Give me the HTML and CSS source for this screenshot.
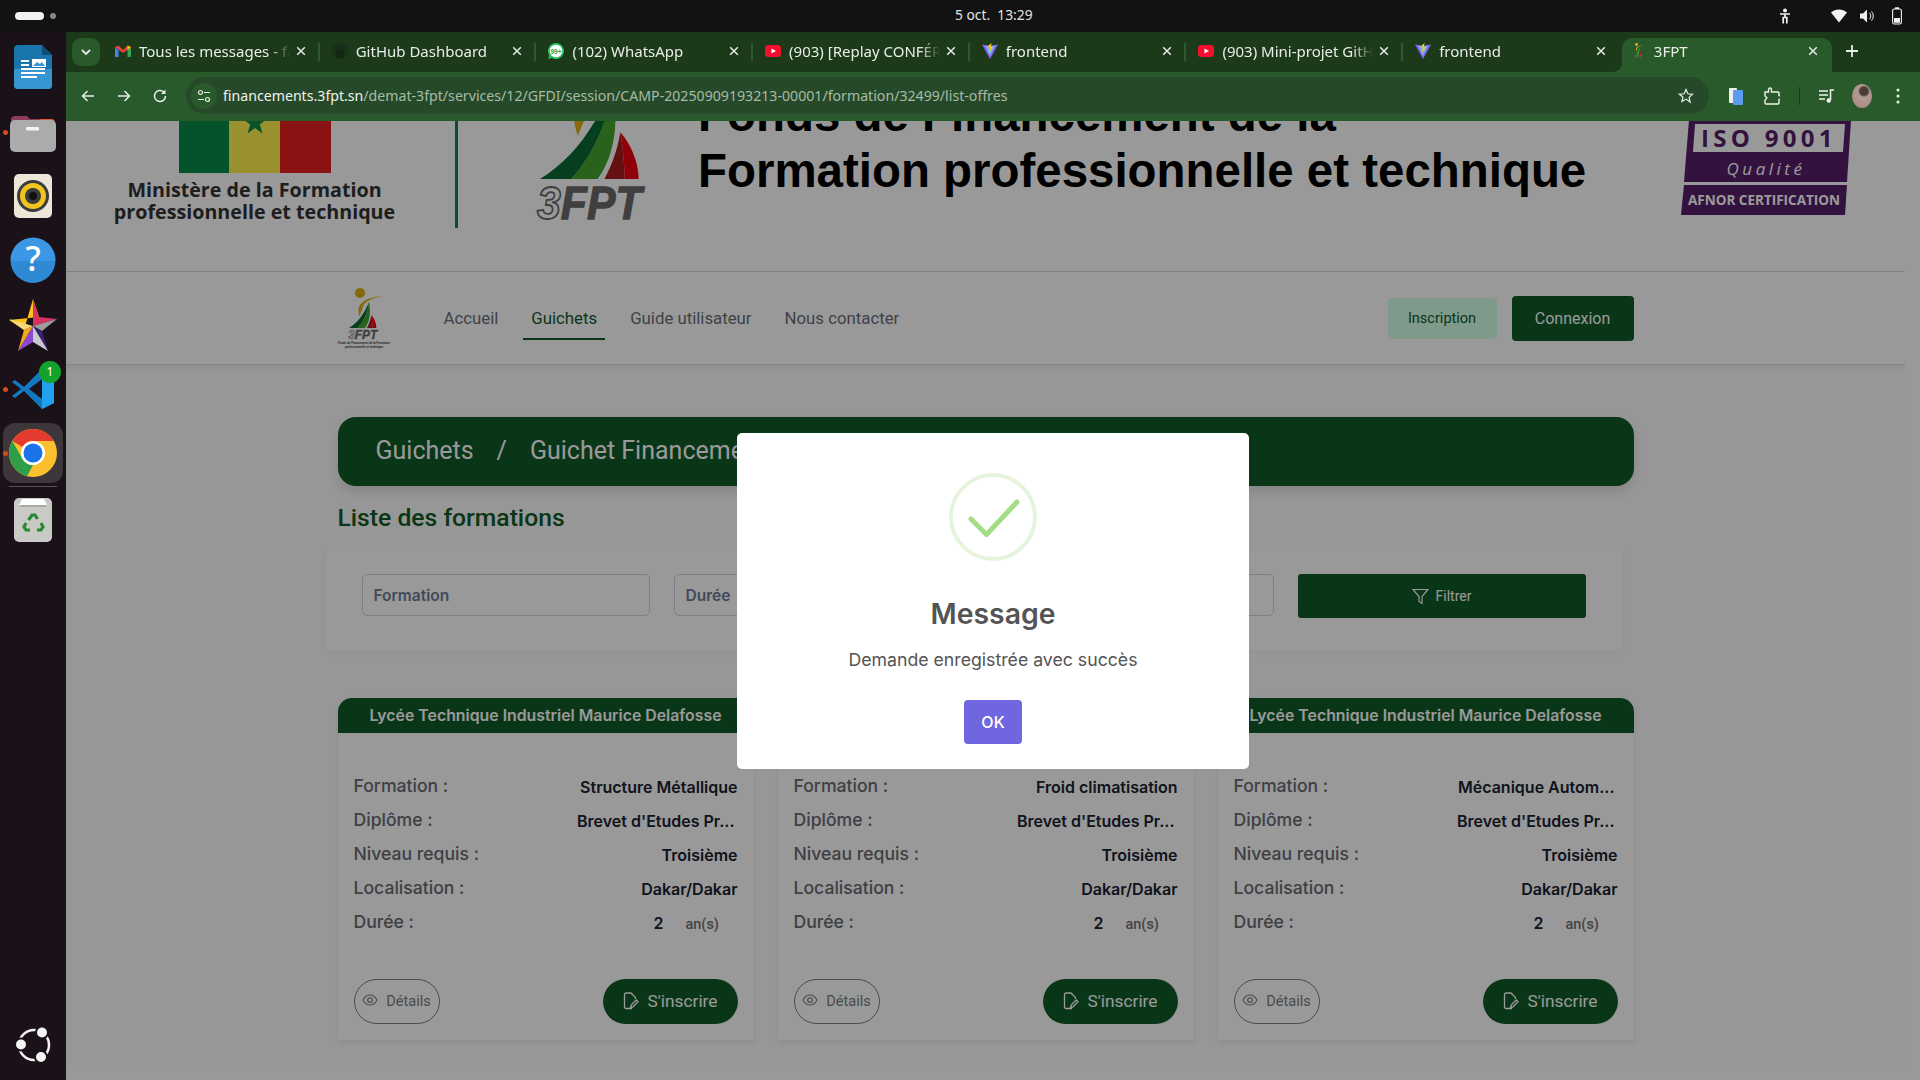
FILE: index.html
```html
<!DOCTYPE html>
<html lang="fr">
<head>
<meta charset="utf-8">
<title>3FPT</title>
<link rel="stylesheet" href="styles.css">
</head>
<body>
<svg class="defs" width="0" height="0" aria-hidden="true">
  <symbol id="logo3fpt" viewBox="0 0 50 54" overflow="visible">
    <circle cx="21" cy="5" r="5" fill="#e0b015"/>
    <path d="M20.500 28C17 18 22 10 44 8 30 11 24 14 23 22Z" fill="#e0b015"/>
    <path d="M10 40C18 35 25 27 30 14 29 24 25 33 18.700 40Z" fill="#0a6a32"/>
    <path d="M18.700 40C24 34 28.500 26 30 14 31.500 20 32 32 26 40Z" fill="#45a32e"/>
    <path d="M27.900 40C30 36 31.500 32 32.300 27 33 31 33.500 36 33.500 40Z" fill="#a81c20"/>
    <path d="M32.300 27C35 30 37.400 35 37.400 40H33.500C33.500 36 33 31 32.300 27Z" fill="#f00010"/>
    <text class="logo-word" x="9.200" y="51" textLength="29" lengthAdjust="spacingAndGlyphs"><tspan class="logo-three">3</tspan>FPT</text>
  </symbol>
  <symbol id="ic-yt" viewBox="0 0 16 16"><rect y="2" width="16" height="12" rx="3.500" fill="#f40f30"/><path d="M6.500 5.500v5L11 8z" fill="#fff"/></symbol>
  <symbol id="ic-vite" viewBox="0 0 16 16"><path d="M0 1.500 8 3l8-1.500L8 16z" fill="#8c5cf6"/><path d="M3 2.500 8 3.300l5-.8L8 13z" fill="#6fb6f5"/><path d="M9.500 0 5.500 3.500 8 4.500 6.500 10 11 4.500 9 4z" fill="#ffc61a"/></symbol>
  <symbol id="ic-x" viewBox="0 0 10 10"><path d="M1.200 1.200l7.600 7.600M8.800 1.200 1.200 8.800" stroke="#e6ece6" stroke-width="1.500" fill="none"/></symbol>
  <symbol id="ic-eye" viewBox="0 0 16 16"><path d="M1 8s2.600-5 7-5 7 5 7 5-2.600 5-7 5-7-5-7-5z" fill="none" stroke="currentColor" stroke-width="1.100"/><circle cx="8" cy="8" r="2.300" fill="none" stroke="currentColor" stroke-width="1.100"/></symbol>
  <symbol id="ic-edit" viewBox="0 0 16 18"><path d="M9 16.500H3A1.500 1.500 0 0 1 1.500 15V2.500A1.500 1.500 0 0 1 3 1h5l4.500 4.500V7" fill="none" stroke="currentColor" stroke-width="1.300"/><path d="M7.500 15.500l.7-2.500 5-5 1.800 1.800-5 5z" fill="none" stroke="currentColor" stroke-width="1.300"/></symbol>
</svg>

<header class="topbar">
  <div class="top-left"><span class="pill"></span><span class="pill-dot"></span></div>
  <div class="clock">5 oct.&nbsp; 13:29</div>
  <div class="top-right">
    <svg width="12" height="16" viewBox="0 0 12 16"><circle cx="6" cy="2.500" r="2" fill="#f2f2f2"/><path d="M1 6h10M6 6v3.500M4.200 15.500V9.500h3.600v6" stroke="#f2f2f2" stroke-width="1.700" fill="none"/></svg>
    <svg class="wifi" width="16" height="14" viewBox="0 0 16 14"><path d="M0 3.500C4.500-.6 11.500-.6 16 3.500L8 13.500z" fill="#f2f2f2"/></svg>
    <svg class="vol" width="16" height="16" viewBox="0 0 16 16"><path d="M1 5.500h3L8 1.500v13l-4-4H1z" fill="#f2f2f2"/><path d="M10.500 5a4.200 4.200 0 0 1 0 6M12.500 3.500a6.500 6.500 0 0 1 0 9" stroke="#f2f2f2" fill="none"/></svg>
    <svg class="batt" width="10" height="18" viewBox="0 0 10 18"><rect x=".6" y="2" width="8.800" height="15" rx="1.800" fill="none" stroke="#f2f2f2" stroke-width="1.100"/><rect x="3" y=".3" width="4" height="1.700" fill="#f2f2f2"/><rect x="2" y="11" width="6" height="4.800" fill="#f2f2f2"/></svg>
  </div>
</header>

<div class="desktop">
  <nav class="dock">
    <div class="dock-item">
      <svg width="38" height="44" viewBox="0 0 38 44"><path d="M4 0H28L38 10V40a4 4 0 0 1-4 4H4a4 4 0 0 1-4-4V4a4 4 0 0 1 4-4z" fill="#1a75ad"/><path d="M0 24H38V40a4 4 0 0 1-4 4H4a4 4 0 0 1-4-4z" fill="#3497d3"/><path d="M28 0 38 10H28z" fill="#0f4e78"/><path d="M7 16h8M7 20h8M7 24h24M7 28h24M7 32h16" stroke="#fff" stroke-width="1.800"/><rect x="18" y="14" width="14" height="8" fill="#fff"/><path d="M19 21l4-4 3 2 2-2 3 4z" fill="#3497d3"/></svg>
    </div>
    <div class="dock-item running">
      <svg width="46" height="40" viewBox="0 0 46 40"><path d="M1 8a4 4 0 0 1 4-4h12l3 3h21a4 4 0 0 1 4 4v10H1z" fill="#8f3b5e"/><path d="M30 7h11a4 4 0 0 1 4 4v6H30z" fill="#d9602c"/><rect y="8" width="46" height="32" rx="5" fill="#ababab"/><rect x="16" y="15" width="13" height="3.500" rx="1" fill="#f4f4f4"/></svg>
    </div>
    <div class="dock-item">
      <svg width="38" height="44" viewBox="0 0 38 44"><rect width="38" height="44" rx="5" fill="#ebe6d8"/><circle cx="19" cy="22" r="16" fill="#3c3c3c"/><circle cx="19" cy="22" r="13" fill="#efc41e"/><circle cx="19" cy="22" r="8" fill="#3a3a3a"/><circle cx="19" cy="22" r="4" fill="#111"/></svg>
    </div>
    <div class="dock-item">
      <svg width="46" height="46" viewBox="0 0 46 46"><circle cx="23" cy="23" r="22.500" fill="#3b97e3"/><path d="M1 24h44a22 22 0 0 1-44 0z" fill="#2f8ad6"/><text class="help-q" x="23" y="34" text-anchor="middle">?</text></svg>
    </div>
    <div class="dock-item">
      <svg class="dock-star" width="48" height="54" viewBox="0 0 48 54"><path d="M24 0 30 18 0 21 15 31z" fill="#fbc41a"/><path d="M24 0 30 18 48 20 24 27z" fill="#d8335f"/><path d="M48 20 33 32 24 27z" fill="#9c9c9c"/><path d="M33 32 39 52 24 27z" fill="#3a2370"/><path d="M39 52 24 43 24 27z" fill="#c8c8d0"/><path d="M24 43 9 52 24 27z" fill="#8a4bd0"/><path d="M9 52 15 31 24 27z" fill="#f2a81a"/><path d="M0 20 24 27 15 31z" fill="#f7d878"/></svg>
    </div>
    <div class="dock-item running">
      <svg width="42" height="40" viewBox="0 0 42 40"><path d="M30 0 12 18 3 11 0 13 9 20 0 27 3 29 12 22 30 40 42 34V6z" fill="#1279bf"/><path d="M30 0 42 6V34L30 40z" fill="#21a0ef"/><path d="M30 10 17 20 30 30z" fill="#1b1118"/></svg>
      <span class="dock-badge">1</span>
    </div>
    <div class="dock-item running active">
      <svg width="48" height="48" viewBox="0 0 48 48"><circle cx="24" cy="24" r="24" fill="#fbc02d"/><path d="M24 0A24 24 0 0 1 44.800 12H24a12 12 0 0 0-10.400 6L3.300 12A24 24 0 0 1 24 0z" fill="#e33b2e"/><path d="M3.300 12 13.600 30A12 12 0 0 0 24 36L18 47.300A24 24 0 0 1 3.300 12z" fill="#2e9e4a"/><circle cx="24" cy="24" r="12" fill="#fff"/><circle cx="24" cy="24" r="9.500" fill="#1a73e8"/></svg>
    </div>
    <div class="dock-sep"></div>
    <div class="dock-item">
      <svg width="38" height="44" viewBox="0 0 38 44"><rect width="38" height="44" rx="5" fill="#c9c9c5"/><path d="M5 7 8 1H30L33 7z" fill="#fff"/><path d="M6 8H32" stroke="#8a8a86"/><g fill="none" stroke="#2d8a34" stroke-width="3.200"><path d="M14.500 22l3.500-5h3l2.500 4"/><path d="M27 25l2 4-2 3h-4"/><path d="M16 32h-4l-2-3 2-4"/></g></svg>
    </div>
    <div class="dock-ubuntu">
      <svg width="36" height="36" viewBox="0 0 36 36"><circle cx="18" cy="18" r="15" fill="none" stroke="#f4f4f4" stroke-width="2.500"/><g fill="#f4f4f4" stroke="#1b1118" stroke-width="2"><circle cx="26" cy="5.500" r="6"/><circle cx="5" cy="17.500" r="6"/><circle cx="25" cy="30" r="6"/></g></svg>
    </div>
  </nav>

  <div class="browser">
    <div class="tabstrip">
      <div class="tabsearch"><svg width="12" height="8" viewBox="0 0 12 8"><path d="M2 2l4 4 4-4" stroke="#e6ece6" stroke-width="1.800" fill="none"/></svg></div>
      <div class="tab">
        <svg class="fav" viewBox="0 0 16 12"><path d="M0 2V11a1 1 0 0 0 1 1H3.500V5.500z" fill="#4285f4"/><path d="M16 2V11a1 1 0 0 1-1 1H12.500V5.500z" fill="#34a853"/><path d="M0 2 3.500 .4 8 5 12.500.4 16 2 8 8z" fill="#ea4335"/><path d="M12.500.4 16 2 12.500 5.500z" fill="#fbbc04"/></svg>
        <span class="tab-title">Tous les messages - fatou</span><svg class="tab-x"><use href="#ic-x"/></svg>
      </div>
      <div class="tab">
        <svg class="fav" viewBox="0 0 16 16"><circle cx="8" cy="8" r="8" fill="#18301a"/><path d="M4 15c1-2 1-3 0-5-.5-3 1-4 2-4h4c1 0 2.500 1 2 4-1 2-1 3 0 5z" fill="#132714"/></svg>
        <span class="tab-title">GitHub Dashboard</span><svg class="tab-x"><use href="#ic-x"/></svg>
      </div>
      <div class="tab">
        <svg class="fav" viewBox="0 0 16 16"><path d="M8 0a8 8 0 0 0-6.800 12.200L0 16l3.900-1.100A8 8 0 1 0 8 0z" fill="#25c05f"/><circle cx="8" cy="8" r="6.300" fill="#fff"/><text class="fav-num" x="8" y="10.500" text-anchor="middle">99+</text></svg>
        <span class="tab-title">(102) WhatsApp</span><svg class="tab-x"><use href="#ic-x"/></svg>
      </div>
      <div class="tab">
        <svg class="fav"><use href="#ic-yt"/></svg>
        <span class="tab-title">(903) [Replay CONFÉRENCE</span><svg class="tab-x"><use href="#ic-x"/></svg>
      </div>
      <div class="tab">
        <svg class="fav"><use href="#ic-vite"/></svg>
        <span class="tab-title">frontend</span><svg class="tab-x"><use href="#ic-x"/></svg>
      </div>
      <div class="tab">
        <svg class="fav"><use href="#ic-yt"/></svg>
        <span class="tab-title">(903) Mini-projet GitHub</span><svg class="tab-x"><use href="#ic-x"/></svg>
      </div>
      <div class="tab tab-before-active">
        <svg class="fav"><use href="#ic-vite"/></svg>
        <span class="tab-title">frontend</span><svg class="tab-x"><use href="#ic-x"/></svg>
      </div>
      <div class="tab tab-active">
        <svg class="fav fav-3fpt" viewBox="8 0 36 54"><use href="#logo3fpt" width="50" height="54"/></svg>
        <span class="tab-title">3FPT</span><svg class="tab-x"><use href="#ic-x"/></svg>
      </div>
      <div class="tab-plus"><svg width="14" height="14" viewBox="0 0 14 14"><path d="M7 1v12M1 7h12" stroke="#e6ece6" stroke-width="1.800"/></svg></div>
    </div>

    <div class="toolbar">
      <svg class="tb-ic" viewBox="0 0 16 16"><path d="M14 8H2.500M7.500 3 2.500 8l5 5" stroke="#e6ece6" stroke-width="1.500" fill="none"/></svg>
      <svg class="tb-ic" viewBox="0 0 16 16"><path d="M2 8h11.500M8.500 3l5 5-5 5" stroke="#e6ece6" stroke-width="1.500" fill="none"/></svg>
      <svg class="tb-ic" viewBox="0 0 16 16"><path d="M13.500 8a5.500 5.500 0 1 1-1.800-4.100" stroke="#e6ece6" stroke-width="1.500" fill="none"/><path d="M13.500 1.500V6H9z" fill="#e6ece6"/></svg>
      <div class="omnibox">
        <span class="omni-chip"><svg width="14" height="14" viewBox="0 0 14 14"><circle cx="3.500" cy="3.500" r="2" fill="none" stroke="#e6ece6" stroke-width="1.200"/><path d="M7 3.500h6M1 10.500h6" stroke="#e6ece6" stroke-width="1.200"/><circle cx="10.500" cy="10.500" r="2" fill="none" stroke="#e6ece6" stroke-width="1.200"/></svg></span>
        <span class="url"><span class="url-host">financements.3fpt.sn</span>/demat-3fpt/services/12/GFDI/session/CAMP-20250909193213-00001/formation/32499/list-offres</span>
        <svg class="omni-star" width="16" height="16" viewBox="0 0 16 16"><path d="M8 1.500l1.900 4.300 4.600.5-3.400 3.100 1 4.600L8 11.100l-4.100 2.400 1-4.600L1.500 6.300l4.600-.5z" fill="none" stroke="#e6ece6" stroke-width="1.200"/></svg>
      </div>
      <div class="tb-right">
        <svg width="16" height="18" viewBox="0 0 16 18"><rect x="1" y="1" width="8" height="15" rx="1" fill="#eef2ee"/><rect x="5" y="3" width="10" height="15" rx="1" fill="#5b9bf0"/></svg>
        <svg class="tb-puzzle" width="16" height="18" viewBox="0 0 16 18"><path d="M1 5h3.500V2.500a1.500 1.500 0 0 1 3 0V5H14a1 1 0 0 1 1 1v2.500a2 2 0 0 1 0 4V16a1 1 0 0 1-1 1H2a1 1 0 0 1-1-1v-3l2-2-2-2z" fill="none" stroke="#eef2ee" stroke-width="1.400"/></svg>
        <span class="tb-sep"></span>
        <svg class="tb-media" width="16" height="14" viewBox="0 0 16 14"><path d="M0 2h9M0 6h9M0 10h6" stroke="#eef2ee" stroke-width="1.400"/><path d="M11.500 11V1H15" stroke="#eef2ee" stroke-width="1.500" fill="none"/><circle cx="9.800" cy="11.500" r="2.200" fill="#eef2ee"/></svg>
        <span class="avatar"></span>
        <svg class="tb-menu" width="4" height="16" viewBox="0 0 4 16"><g fill="#eef2ee"><circle cx="2" cy="2" r="1.500"/><circle cx="2" cy="8" r="1.500"/><circle cx="2" cy="14" r="1.500"/></g></svg>
      </div>
    </div>

    <div class="viewport">
      <div class="page">
        <section class="site-head">
          <div class="ministry">
            <div class="flag"><span class="flag-g"></span><span class="flag-y"><svg width="26" height="26" viewBox="0 0 26 26"><path d="M13 1l3 9h9l-7.300 5.500 2.800 9L13 19l-7.500 5.500 2.800-9L1 10h9z" fill="#0c8a46"/></svg></span><span class="flag-r"></span></div>
            <p class="ministry-name">Ministère de la Formation<br>professionnelle et technique</p>
          </div>
          <span class="head-sep"></span>
          <svg class="logo-big"><use href="#logo3fpt" width="180" height="194.400"/></svg>
          <h1 class="fund-title">Fonds de Financement de la<br>Formation professionnelle et technique</h1>
          <svg class="iso" width="172" height="96" viewBox="0 0 172 96">
            <path d="M8 0H170L166 62H3z" fill="#561f6b"/>
            <path d="M3 65H166L164 95H0z" fill="#561f6b"/>
            <path d="M14 4H164L162 32H12z" fill="#fff"/>
            <text class="iso-a" x="88" y="27" text-anchor="middle">ISO 9001</text>
            <text class="iso-b" x="85" y="55" text-anchor="middle">Qualité</text>
            <text class="iso-c" x="83" y="85" text-anchor="middle">AFNOR CERTIFICATION</text>
          </svg>
        </section>

        <section class="site-nav">
          <div class="container nav-row">
            <svg class="logo-small" viewBox="0 0 50 60"><use href="#logo3fpt" width="50" height="54"/><text class="logo-tiny" x="25" y="56" text-anchor="middle">Fonds de Financement de la Formation</text><text class="logo-tiny" x="25" y="59.500" text-anchor="middle">professionnelle et technique</text></svg>
            <div class="nav-links">
              <a class="nav-link">Accueil</a>
              <a class="nav-link nav-current">Guichets</a>
              <a class="nav-link">Guide utilisateur</a>
              <a class="nav-link">Nous contacter</a>
            </div>
            <a class="btn-inscription">Inscription</a>
            <a class="btn-connexion">Connexion</a>
          </div>
        </section>

        <main class="content">
          <div class="container">
            <div class="crumbs"><span>Guichets</span><span class="crumb-sep">/</span><span>Guichet Financement</span></div>
            <h2 class="list-title">Liste des formations</h2>
            <div class="filters">
              <div class="field">Formation</div>
              <div class="field">Durée</div>
              <div class="field"></div>
              <div class="btn-filter"><svg width="17" height="17" viewBox="0 0 17 17"><path d="M1 1.500h15l-6 7v7l-3-2v-5z" fill="none" stroke="currentColor" stroke-width="1.200"/></svg><span>Filtrer</span></div>
            </div>
            <div class="cards">
              <article class="card">
                <h3 class="card-head">Lycée Technique Industriel Maurice Delafosse</h3>
                <div class="card-body">
                  <div class="row"><span class="lab">Formation :</span><span class="val">Structure Métallique</span></div>
                  <div class="row"><span class="lab">Diplôme :</span><span class="val val-cut">Brevet d'Etudes Pr...</span></div>
                  <div class="row"><span class="lab">Niveau requis :</span><span class="val">Troisième</span></div>
                  <div class="row"><span class="lab">Localisation :</span><span class="val">Dakar/Dakar</span></div>
                  <div class="row"><span class="lab">Durée :</span><span class="dur"><span class="val">2</span><span class="unit">an(s)</span></span></div>
                  <div class="actions">
                    <a class="btn-details"><svg width="16" height="16"><use href="#ic-eye"/></svg><span>Détails</span></a>
                    <a class="btn-sub"><svg width="16" height="18"><use href="#ic-edit"/></svg><span>S'inscrire</span></a>
                  </div>
                </div>
              </article>
              <article class="card">
                <h3 class="card-head">Lycée Technique Industriel Maurice Delafosse</h3>
                <div class="card-body">
                  <div class="row"><span class="lab">Formation :</span><span class="val">Froid climatisation</span></div>
                  <div class="row"><span class="lab">Diplôme :</span><span class="val val-cut">Brevet d'Etudes Pr...</span></div>
                  <div class="row"><span class="lab">Niveau requis :</span><span class="val">Troisième</span></div>
                  <div class="row"><span class="lab">Localisation :</span><span class="val">Dakar/Dakar</span></div>
                  <div class="row"><span class="lab">Durée :</span><span class="dur"><span class="val">2</span><span class="unit">an(s)</span></span></div>
                  <div class="actions">
                    <a class="btn-details"><svg width="16" height="16"><use href="#ic-eye"/></svg><span>Détails</span></a>
                    <a class="btn-sub"><svg width="16" height="18"><use href="#ic-edit"/></svg><span>S'inscrire</span></a>
                  </div>
                </div>
              </article>
              <article class="card">
                <h3 class="card-head">Lycée Technique Industriel Maurice Delafosse</h3>
                <div class="card-body">
                  <div class="row"><span class="lab">Formation :</span><span class="val val-cut">Mécanique Autom...</span></div>
                  <div class="row"><span class="lab">Diplôme :</span><span class="val val-cut">Brevet d'Etudes Pr...</span></div>
                  <div class="row"><span class="lab">Niveau requis :</span><span class="val">Troisième</span></div>
                  <div class="row"><span class="lab">Localisation :</span><span class="val">Dakar/Dakar</span></div>
                  <div class="row"><span class="lab">Durée :</span><span class="dur"><span class="val">2</span><span class="unit">an(s)</span></span></div>
                  <div class="actions">
                    <a class="btn-details"><svg width="16" height="16"><use href="#ic-eye"/></svg><span>Détails</span></a>
                    <a class="btn-sub"><svg width="16" height="18"><use href="#ic-edit"/></svg><span>S'inscrire</span></a>
                  </div>
                </div>
              </article>
            </div>
          </div>
        </main>
      </div>
      <div class="scrollbar"></div>

      <div class="overlay">
        <div class="modal">
          <div class="modal-icon"><svg width="88" height="88" viewBox="0 0 88 88"><circle cx="44" cy="44" r="42" fill="none" stroke="#e6f4de" stroke-width="4"/><path d="M22 46l15.500 15.500L68 29" fill="none" stroke="#a5dc86" stroke-width="5" stroke-linecap="round" stroke-linejoin="round"/></svg></div>
          <h2 class="modal-title">Message</h2>
          <p class="modal-text">Demande enregistrée avec succès</p>
          <button class="modal-ok">OK</button>
        </div>
      </div>
    </div>
  </div>
</div>
</body>
</html>
```
FILE: styles.css
```css
* { box-sizing: border-box; }
html, body { margin: 0; height: 100%; overflow: hidden; }
body { font-family: "Inter", "Liberation Sans", sans-serif; display: flex; flex-direction: column; background: #121212; }
.defs { position: absolute; }
h1, h2, h3, p { margin: 0; }

/* Top bar */
.topbar { height: 32px; flex: none; background: #121212; display: grid; grid-template-columns: 955px auto 1fr; align-items: center; padding-right: 18px; }
.top-left { display: flex; align-items: center; padding-left: 15px; gap: 6px; }
.pill { width: 29px; height: 8px; border-radius: 4px; background: #f2f2f2; }
.pill-dot { width: 6px; height: 6px; border-radius: 50%; background: #8a8a8a; }
.clock { font: 13.800px/30px "Noto Sans", sans-serif; color: #e4e4e4; padding-bottom: 2px; }
.top-right { display: flex; align-items: center; justify-content: flex-end; }
.wifi { margin-left: 40px; }
.vol { margin-left: 12px; }
.batt { margin-left: 17px; }

.desktop { flex: 1; display: flex; min-height: 0; }

/* Dock */
.dock { width: 66px; flex: none; background: #1b1118; display: flex; flex-direction: column; align-items: center; padding-top: 3px; }
.dock-item { width: 60px; height: 64.400px; display: flex; align-items: center; justify-content: center; position: relative; flex: none; }
.dock-item.active { background: #3d363b; border-radius: 12px; height: 60px; margin-top: 2px; margin-bottom: 2px; }
.dock-star { margin-top: 3px; }
.running::before { content: ""; position: absolute; left: 0; top: 50%; width: 5px; height: 5px; margin-top: -2px; border-radius: 50%; background: #d84a15; }
.dock-badge { position: absolute; top: 4px; right: 2px; width: 22px; height: 22px; border-radius: 50%; background: #13a32c; color: #fff; font: 12px/22px "Noto Sans", sans-serif; text-align: center; }
.dock-sep { width: 48px; height: 1px; background: #5a5358; margin: 1px 0 0; flex: none; }
.dock-ubuntu { margin-top: auto; padding-bottom: 13px; padding-left: 1px; }
.help-q { font: 500 34px "Noto Sans", sans-serif; fill: #fff; }

/* Browser */
.browser { flex: 1; min-width: 0; display: flex; flex-direction: column; }
.tabstrip { height: 40px; flex: none; background: #1c3a1a; display: flex; padding: 6px 0 0 6px; }
.tabsearch { width: 28px; height: 28px; border-radius: 9px; background: #2a5a2c; display: flex; align-items: center; justify-content: center; margin-right: 3px; flex: none; }
.tab { width: 216.700px; height: 34px; flex: none; display: flex; align-items: center; padding: 0 12px 8px; position: relative; color: #e8ede8; font: 15px "Noto Sans", sans-serif; }
.tab::after { content: ""; position: absolute; right: 0; top: 5px; height: 18px; width: 2px; background: #2c5a2e; }
.tab-before-active::after, .tab-active::after { display: none; }
.fav { width: 16px; height: 16px; flex: none; margin-right: 8px; }
.fav-3fpt { margin-left: -1px; }
.fav-num { font: 700 6.500px "Liberation Sans", sans-serif; fill: #25a050; }
.tab-title { flex: 1; min-width: 0; white-space: nowrap; overflow: hidden; -webkit-mask-image: linear-gradient(to left, transparent, #000 20px); mask-image: linear-gradient(to left, transparent, #000 20px); padding-right: 4px; }
.tab-x { width: 10px; height: 10px; flex: none; margin: 0 2px 0 6px; }
.tab-active { background: #295a2b; border-radius: 10px 10px 0 0; width: 210px; padding-left: 9px; margin-left: 2px; }
.tab-active::before { content: ""; position: absolute; left: -10px; bottom: 0; width: 10px; height: 10px; background: radial-gradient(circle at 0 0, transparent 10px, #295a2b 10.500px); }
.tab-plus { margin-left: 13px; height: 34px; display: flex; align-items: center; padding-bottom: 8px; }

.toolbar { height: 49px; flex: none; background: #295a2b; display: flex; align-items: center; padding-left: 14px; padding-bottom: 2px; }
.tb-ic { width: 16px; height: 16px; margin-right: 20px; flex: none; }
.omnibox { width: 1523px; height: 37px; margin-left: -2px; border-radius: 19px; background: #264a29; display: flex; align-items: center; flex: none; padding-left: 5px; }
.omni-chip { width: 26px; height: 26px; border-radius: 50%; background: #295a2b; display: flex; align-items: center; justify-content: center; flex: none; }
.url { margin-left: 6px; font: 14.150px "Noto Sans", sans-serif; color: #a6bba7; white-space: nowrap; flex: 1; }
.url-host { color: #eef2ee; }
.omni-star { margin-right: 15px; flex: none; }
.tb-right { display: flex; align-items: center; margin-left: 19px; }
.tb-puzzle { margin-left: 20px; }
.tb-sep { width: 1px; height: 18px; background: #173a19; margin-left: 19px; }
.tb-media { margin-left: 19px; }
.avatar { width: 20px; height: 24px; border-radius: 50%; margin-left: 17px; background: radial-gradient(circle at 60% 30%, #4c3c38 0 4px, #b49a94 6px, #a8857f 100%); }
.tb-menu { margin-left: 24px; }

/* Page */
.viewport { flex: 1; min-height: 0; display: flex; position: relative; overflow: hidden; background: #fff; }
.page { flex: 1; min-width: 0; background: #fff; overflow: hidden; }
.scrollbar { width: 15px; flex: none; background: #fff; }
.container { width: 1296px; margin: 0 auto; }

.site-head { height: 151px; border-bottom: 1px solid #d9d9dc; overflow: hidden; display: flex; align-items: flex-end; padding-left: 48px; padding-bottom: 43px; position: relative; }
.ministry { width: 281px; flex: none; display: flex; flex-direction: column; align-items: center; margin-bottom: 5px; }
.flag { width: 152px; height: 60px; display: flex; }
.flag span { flex: 1; display: flex; justify-content: center; }
.flag-g { background: #088a46; }
.flag-y { background: #fff04d; }
.flag-r { background: #e61e21; }
.flag svg { margin-top: -4px; }
.ministry-name { font: 700 19.700px/22px "Open Sans", sans-serif; color: #333; text-align: center; white-space: nowrap; margin-top: 6px; }
.head-sep { width: 3px; height: 130px; background: #12824a; margin-left: 60px; flex: none; margin-bottom: 0; }
.logo-big { width: 180px; height: 195px; margin-left: 46px; flex: none; overflow: visible; margin-bottom: -2px; }
.logo-word { font: italic 700 13px "Liberation Sans", sans-serif; fill: #6a6a6a; stroke: #6a6a6a; stroke-width: .35; }
.logo-three { fill: none; stroke: #6a6a6a; stroke-width: .5; }
.logo-tiny { font: 700 2.800px "Liberation Sans", sans-serif; fill: #333; stroke: none; }
.fund-title { font: 700 47.450px/56px "Liberation Sans", sans-serif; color: #000; white-space: nowrap; margin-left: 14px; width: 983px; flex: none; margin-bottom: 29px; }
.iso { flex: none; margin-bottom: 12px; }
.iso-a { font: 700 24px "Open Sans", sans-serif; letter-spacing: 4.300px; fill: #561f6b; }
.iso-b { font: italic 500 17px "Open Sans", sans-serif; letter-spacing: 3.500px; fill: #fff; }
.iso-c { font: 700 13.500px "Open Sans", sans-serif; fill: #fff; }

.site-nav { height: 93px; border-bottom: 1px solid #dcdce0; }
.nav-row { height: 92px; display: flex; align-items: center; }
.logo-small { width: 50px; height: 60px; margin-left: 1px; flex: none; overflow: visible; }
.nav-links { display: flex; gap: 17px; margin-left: 47px; }
.nav-link { font: 16.800px/24px "Roboto", sans-serif; color: #6b6f78; padding: 10px 8px 8px; border-bottom: 2px solid transparent; white-space: nowrap; }
.nav-current { color: #115a28; border-bottom-color: #115a28; }
.btn-inscription { margin-left: auto; width: 109px; height: 41px; border-radius: 4px; background: #d4ffe8; color: #115a28; font: 14.500px/41px "Roboto", sans-serif; text-align: center; margin-right: 15px; }
.btn-connexion { width: 122px; height: 45px; border-radius: 4px; background: #115a28; color: #fff; font: 16px/45px "Roboto", sans-serif; text-align: center; }

.content { background: #fcfcfc; box-shadow: inset 0 8px 6px -6px #e9e9ee; padding-top: 52px; min-height: 700px; }
.crumbs { height: 69px; border-radius: 18px; background: #115a28; color: #fff; display: flex; align-items: center; padding: 0 0 3px 38px; font: 400 25px "Roboto", sans-serif; box-shadow: 0 6px 12px rgba(0,0,0,.12); white-space: nowrap; }
.crumb-sep { margin: 0 23px; }
.list-title { font: 500 24.700px/30px "Roboto", sans-serif; color: #115a28; margin-top: 17px; }
.filters { width: 1296px; margin: 17px 0 0 -12px; background: #fff; padding: 24px 36px; display: grid; grid-template-columns: repeat(4, 288px); gap: 24px; box-shadow: 0 2px 8px rgba(0,0,0,.03); height: 100px; }
.field { height: 42px; border: 1px solid #cfd4e2; border-radius: 5px; font: 600 15.500px/42px "Inter", sans-serif; color: #6f7a96; padding-left: 11px; background: #fff; }
.btn-filter { height: 44px; background: #115a28; border-radius: 3px; color: #fff; display: flex; align-items: center; justify-content: center; gap: 7px; font: 14px "Roboto", sans-serif; }
.cards { display: grid; grid-template-columns: repeat(3, 416px); gap: 24px; margin-top: 48px; }
.card { background: #fff; box-shadow: 0 2px 6px rgba(0,0,0,.08); height: 342px; border-radius: 14px 14px 0 0; }
.card-head { height: 35px; border-radius: 14px 14px 0 0; background: #115a28; color: #fff; font: 600 15.850px/35px "Inter", sans-serif; text-align: center; white-space: nowrap; }
.card-body { padding: 36.500px 16px 0; }
.row { height: 34px; display: flex; justify-content: space-between; align-items: center; }
.lab { font: 500 17.600px "Inter", sans-serif; color: #6a6a72; margin-top: -2px; }
.val { font: 600 16px "Inter", sans-serif; color: #1a2230; white-space: nowrap; }
.val-cut { margin-right: 3px; }
.dur { display: flex; align-items: baseline; width: 84px; gap: 22px; }
.unit { font: 500 14.500px "Roboto", sans-serif; color: #6f6f76; }
.actions { display: flex; justify-content: space-between; margin-top: 39px; }
.btn-details { width: 86px; height: 45px; border: 1px solid #7a7a7a; border-radius: 23px; color: #7c7c7c; display: flex; align-items: center; justify-content: center; gap: 8px; font: 14.500px "Roboto", sans-serif; }
.btn-details svg { margin-top: -3px; }
.btn-sub { width: 135px; height: 45px; border-radius: 23px; background: #115a28; color: #fff; display: flex; align-items: center; justify-content: center; gap: 9px; font: 17.300px "Roboto", sans-serif; }

/* Modal */
.overlay { position: absolute; inset: 0; background: rgba(0,0,0,.4); display: flex; align-items: center; justify-content: center; }
.modal { width: 512px; height: 336px; background: #fff; border-radius: 5px; display: flex; flex-direction: column; align-items: center; padding-top: 40px; }
.modal-icon { width: 88px; height: 88px; flex: none; }
.modal-title { font: 600 28.400px/36px "Inter", sans-serif; color: #545454; margin-top: 35px; }
.modal-text { font: 400 17.700px/24px "Inter", sans-serif; color: #545454; margin-top: 16px; }
.modal-ok { width: 58px; height: 44px; border: 0; border-radius: 4px; background: #7066e0; color: #fff; font: 500 16px "Inter", sans-serif; margin-top: 28px; padding: 0; }
```
